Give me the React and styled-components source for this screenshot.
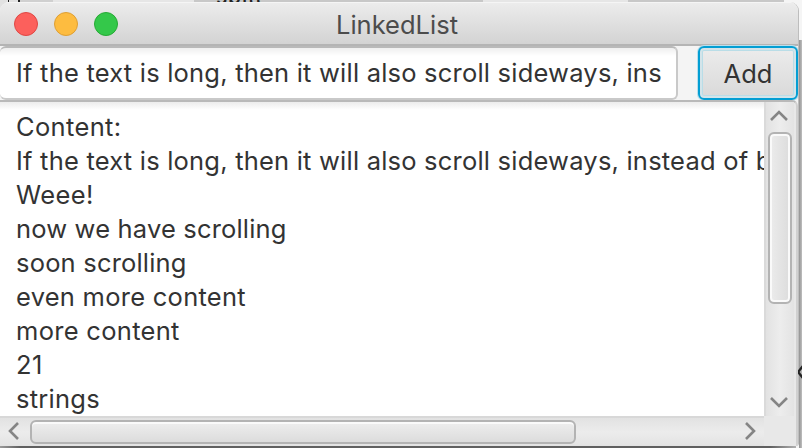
import React from "react";
import styled, { createGlobalStyle } from "styled-components";

const Global = createGlobalStyle`
  *{box-sizing:border-box}
  html,body{margin:0;padding:0;overflow:hidden}
  body{font-family:Inter,"Liberation Sans",sans-serif;font-size:25.5px;color:#333}
`;

const Desktop = styled.div`
  position: relative;
  width: 802px;
  height: 448px;
  padding-top: 2px;
  overflow: hidden;
  background:
    linear-gradient(90deg, #9a9a9a, #606060 20px 770px, #b0b0b0) 0 446px / 796px 2px no-repeat,
    linear-gradient(90deg, #929292, #bfbfbf) 799px 40px / 3px 408px no-repeat,
    linear-gradient(90deg, #222 1px, transparent 1px 10px, #222 10px 12px, transparent 12px) 8px 0 / 13px 2px no-repeat,
    linear-gradient(90deg, #e2e2e2 0 20px, #d0d0d0 20px 53px, #e6e6e6 53px 194px, #c8c8c8 194px 483px, #e6e6e6 483px 628px, #c8c8c8 628px 784px, #f5f5f5 784px);
`;

const Peek = styled.div`
  position: absolute;
  color: #222;
  line-height: 1;
  overflow: hidden;
  top: 0;
  left: 216px;
  width: 80px;
  height: 2px;
`;
const PeekText = styled.span`
  display: block;
  margin-top: -14px;
  font-size: 21px;
  font-weight: 500;
  letter-spacing: 0.8px;
`;

const Frame = styled.div`
  position: relative;
  width: 799px;
  height: 444px;
  display: flex;
  flex-direction: column;
  overflow: hidden;
  border-radius: 9px 9px 3px 0;
  background: #f4f4f4;
  border-right: 1px solid #bdbdbd;
`;

const TitleBar = styled.div`
  height: 44px;
  flex: none;
  display: grid;
  grid-template-columns: 120px 1fr 124px;
  align-items: center;
  background: linear-gradient(#ececec, #d3d3d3);
  border-top: 1px solid #f5f5f5;
  border-bottom: 2px solid #b4b4b4;
`;
const Lights = styled.div`
  display: flex;
  gap: 16px;
  padding-left: 14px;
  padding-top: 1px;
`;
const Light = styled.span`
  width: 24px;
  height: 24px;
  border-radius: 50%;
  background: ${(p) => p.$fill};
  border: 1px solid ${(p) => p.$edge};
`;
const Title = styled.div`
  text-align: center;
  color: #4c4c4c;
  white-space: nowrap;
  letter-spacing: 0;
  padding-top: 2px;
`;

const Row = styled.div`
  height: 54px;
  flex: none;
  display: flex;
  justify-content: space-between;
`;
const Field = styled.div`
  width: 678px;
  height: 54px;
  padding: 0 0 0 16px;
  border: 2px solid #c9c9c9;
  border-top-color: #b9b9b9;
  border-left: 0;
  border-radius: 6px;
  background: linear-gradient(#efefef, #fff 8px);
`;
const Value = styled.div`
  white-space: pre;
  line-height: 50px;
  letter-spacing: 0.21px;
`;
const AddButton = styled.button`
  width: 100px;
  height: 54px;
  padding: 0;
  border: 2px solid #039ed3;
  border-radius: 6px;
  background: linear-gradient(#ececec, #d9d9d9);
  box-shadow: 0 0 0 1px #b9dfec, inset 0 0 0 2px #d3e4ea, inset 0 0 0 3px #b9dde7;
  font: inherit;
  color: #333;
  letter-spacing: 0;
`;

const Area = styled.div`
  flex: 1;
  min-height: 0;
  display: grid;
  grid-template-columns: 764px 30px;
  grid-template-rows: 314px 30px;
  background: #e8e8e8;
  border-top: 2px solid #b9b9b9;
  border-right: 2px solid #d0d0d0;
  border-radius: 0 6px 0 0;
`;
const Content = styled.div`
  overflow: hidden;
  padding: 8px 0 0 16px;
  background: linear-gradient(#ececec, #fff 8px);
`;
const Line = styled.div`
  height: 34px;
  line-height: 34px;
  white-space: pre;
  letter-spacing: ${(p) => p.$track}px;
`;

const VBar = styled.div`
  display: flex;
  flex-direction: column;
  align-items: center;
  justify-content: space-between;
  border-left: 2px solid #dadada;
  background: linear-gradient(90deg, #e2e2e2, #ededed 50%, #e3e3e3);
`;
const VThumb = styled.div`
  width: 24px;
  height: 172px;
  margin-bottom: 83px;
  border: 2px solid #b3b3b3;
  border-radius: 6px;
  background: linear-gradient(90deg, #ececec, #dcdcdc);
  box-shadow: inset 0 0 0 2px #fafafa;
`;
const HBar = styled.div`
  display: flex;
  align-items: center;
  border-top: 2px solid #d8d8d8;
  background: linear-gradient(#e2e2e2, #ececec 50%, #e3e3e3);
`;
const HThumb = styled.div`
  width: 546px;
  height: 24px;
  margin-right: 165px;
  border: 2px solid #b3b3b3;
  border-radius: 6px;
  background: linear-gradient(#eee, #dcdcdc);
  box-shadow: inset 0 2px 0 #fafafa;
`;
const Arrow = styled.svg`
  display: block;
  flex: none;
  overflow: visible;
  margin: ${(p) => p.$margin};
  fill: none;
  stroke: #858585;
  stroke-width: 2.6;
`;

const Behind = styled.svg`
  position: absolute;
  right: 0;
  top: 364px;
  fill: none;
  stroke: #222;
  stroke-width: 2.4;
`;

const lines = [
  ["Content:", 0.35],
  ["If the text is long, then it will also scroll sideways, instead of b", 0.21],
  ["Weee!", 0.4],
  ["now we have scrolling", 0.17],
  ["soon scrolling", 0.19],
  ["even more content", 0.26],
  ["more content", 0.3],
  ["21", 0.5],
  ["strings", 0.25],
];

export default function App() {
  return (
    <>
      <Global />
      <Desktop>
        <Peek><PeekText>spitt</PeekText></Peek>
        <Frame>
          <TitleBar>
            <Lights>
              <Light $fill="#fc605c" $edge="#df4744" />
              <Light $fill="#fdbc40" $edge="#de9f34" />
              <Light $fill="#34c84a" $edge="#27aa35" />
            </Lights>
            <Title>LinkedList</Title>
          </TitleBar>
          <Row>
            <Field><Value>If the text is long, then it will also scroll sideways, ins</Value></Field>
            <AddButton>Add</AddButton>
          </Row>
          <Area>
            <Content>
              {lines.map(([text, track]) => <Line key={text} $track={track}>{text}</Line>)}
            </Content>
            <VBar>
              <Arrow $margin="9px 2px 0 0" width="18" height="9"><path d="M1 9L9 1L17 9" /></Arrow>
              <VThumb />
              <Arrow $margin="0 2px 9px 0" width="18" height="9"><path d="M1 0L9 8L17 0" /></Arrow>
            </VBar>
            <HBar>
              <Arrow $margin="0 12px 0 8px" width="10" height="18"><path d="M10 0L2 8L10 16" /></Arrow>
              <HThumb />
              <Arrow $margin="0" width="10" height="18"><path d="M5 0L13 8L5 16" /></Arrow>
            </HBar>
          </Area>
        </Frame>
        <Behind width="4" height="16"><path d="M5 2L0 8L5 14" /></Behind>
      </Desktop>
    </>
  );
}
